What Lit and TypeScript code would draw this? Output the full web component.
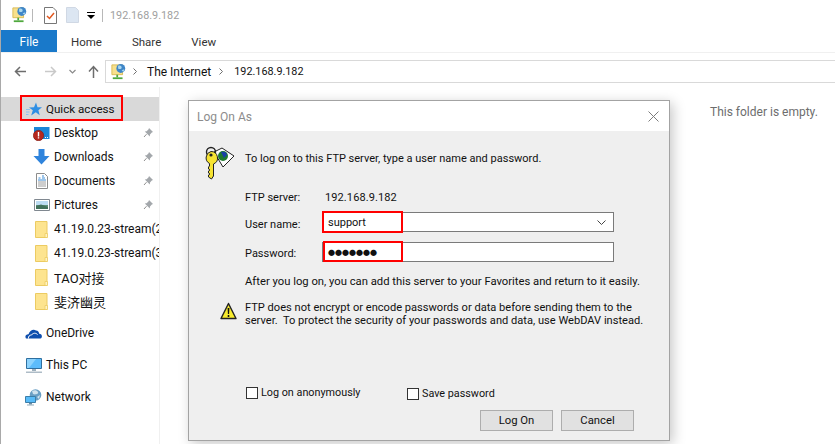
import { LitElement, html, css } from "lit";
import { customElement } from "lit/decorators.js";

const netIcon = html`<svg viewBox="0 0 18 20" width="16" height="18"><path d="M1 2h12v11H1z" fill="#f7e08c" stroke="#d8b84e"/><circle cx="11" cy="6" r="5" fill="#3f86c8"/><path d="M8 3c2-1 4 0 4 2s-3 2-4 1zM12 8l3-1-1 3z" fill="#a9d7ee"/><path d="M6 13h2v3H6z" fill="#4fa83d"/><path d="M2 16h11v2H2z" fill="#4fa83d"/></svg>`;
const pin = html`<svg class="pin" viewBox="0 0 11 11" width="11" height="11"><path d="M6 1l4 4-1.2.6L7 7.600 6.800 9.600 1.800 4.400 3.600 4.200l2-2z" fill="#a3a7ab"/><path d="M3.500 7.200L1 10" stroke="#8f8f8f" fill="none"/></svg>`;
const folder = html`<svg viewBox="0 0 13 17" width="13" height="17"><path d="M.5.500h11.500v16H.5z" fill="#fde48f" stroke="#eccb62"/><path d="M10 12.500h2.500v4H10z" fill="#fff3c4" stroke="#eccb62" stroke-width=".8"/></svg>`;

const icons: Record<string, unknown> = {
  star: html`<svg viewBox="0 0 16 15" width="16" height="15"><path d="M10 .5l1.500 4.700 4.500.1-3.600 2.900 1.300 5-3.900-2.900-4.600 3.200 1.600-5.300L3 5.400l5-.1z" fill="#2f8fe4"/><path d="M0 7.500h4M0 10h3.500M0 12.500h2.500" stroke="#8cc4ef"/></svg>`,
  desktop: html`<svg viewBox="0 0 17 15" width="17" height="15"><path d="M1 1h15.500v12H1z" fill="#1a86d8"/><path d="M12 11h1v1h-1zM14 11h1v1h-1z" fill="#fff"/><circle cx="5.500" cy="9.500" r="5.200" fill="#b5271e" stroke="#7d1913" stroke-width=".6"/><path d="M4.800 6h1.400v4.400H4.800zM4.800 11.200h1.400v1.400H4.800z" fill="#fff"/></svg>`,
  downloads: html`<svg viewBox="0 0 17 16" width="17" height="16"><path d="M5.500 0h6v7h5L8.500 15.500.5 7h5z" fill="#2f84dc"/></svg>`,
  documents: html`<svg viewBox="0 0 12 16" width="12" height="16"><path d="M.5.500h8l3 3v12H.5z" fill="#fff" stroke="#8c8c8c"/><path d="M2.500 5h2M6 3h2M6 5h3M2 7h8" stroke="#3b8cd6"/><path d="M2 9h8M2 11h8M2 13h8" stroke="#9c9c9c"/></svg>`,
  pictures: html`<svg viewBox="0 0 16 12" width="16" height="12"><path d="M.5.500h15v11H.5z" fill="#fff" stroke="#808890"/><path d="M2 2h12v4H2z" fill="#bcdcf2"/><path d="M2 6h12v4H2z" fill="#5f9079"/><path d="M2 7l5-1.500L14 8v2H2z" fill="#41705a"/></svg>`,
  folder,
  onedrive: html`<svg viewBox="0 0 17 11" width="17" height="11"><path d="M1 10.500C-.5 8.500 1 6 3.500 6.200 4.500 2.500 8.500.5 11 2.500c2 .2 3 1.500 3.200 3.200 2-.1 3 1.400 2.600 3.200-.2 1-1 1.600-2 1.600H1z" fill="#0f4fae"/><path d="M3.500 10.500c-.4-2 1-3.500 3.200-3.600 1-2 4.500-2.300 5.800-.3" stroke="#fff" fill="none"/></svg>`,
  pc: html`<svg viewBox="0 0 16 15" width="16" height="15"><path d="M.5.500h15v10H.5z" fill="#5cbcfb" stroke="#2f6f9f"/><path d="M1 1h9L3 10H1z" fill="#8dd3fd"/><path d="M6 11h4v2H6z" fill="#9fb0bd"/><path d="M0 13.500h16V15H0z" fill="#aebcc7"/></svg>`,
  network: html`<svg viewBox="0 0 17 17" width="17" height="17"><circle cx="10.500" cy="6" r="5.800" fill="#6a9fc4"/><path d="M7 2c2-1 5-1 6 1s-3 3-5 2zM12 8l3-2-1 4z" fill="#cfe2ee"/><path d="M.5 7.500h10v6H.5z" fill="#58bbf8" stroke="#3c7ea8"/><path d="M4 14h3v1.500H4z" fill="#6a8ca2"/><path d="M2 15.500h7v1H2z" fill="#8fa8b8"/></svg>`,
};

const nav: Array<[string, string, boolean?]> = [
  ["Desktop", "desktop", true],
  ["Downloads", "downloads", true],
  ["Documents", "documents", true],
  ["Pictures", "pictures", true],
  ["41.19.0.23-stream(2)", "folder"],
  ["41.19.0.23-stream(3)", "folder"],
  ["TAO对接", "folder"],
  ["斐济幽灵", "folder"],
];

@customElement("app-root")
export class AppRoot extends LitElement {
  static styles = css`
    :host {
      display: block; width: 835px; height: 444px; overflow: hidden; position: relative;
      background: #fff; color: #000;
      font-family: Roboto, "Noto Sans CJK SC", sans-serif; font-size: 12px;
      border-left: 1px solid #a9a9a9; box-sizing: border-box;
    }
    svg { display: block; flex: none; }
    .titlebar { height: 30px; display: flex; align-items: center; padding-left: 11px; color: #a0a0a0; }
    .ip { font-size: 10.8px; }
    .sep { width: 1px; height: 13px; background: #b8b8b8; }
    .tabs { height: 23px; display: flex; align-items: stretch; border-bottom: 1px solid #f0f0f0; box-sizing: border-box; font-size: 11.5px; }
    .file { width: 56px; background: #1979ca; color: #fff; display: flex; align-items: center; justify-content: center; padding-top: 1px; box-sizing: border-box; font-size: 12px; }
    .tab { display: flex; align-items: center; color: #333; padding-top: 1px; }
    .navbar { height: 34px; display: flex; align-items: center; box-sizing: border-box; padding-top: 3px; }
    .addr { margin-left: 6px; flex: 1; height: 21px; border: 1px solid #d9d9d9; border-right: none; display: flex; align-items: center; padding-left: 5px; font-size: 12px; color: #111; }
    .body { display: grid; grid-template-columns: 159px 1fr; height: 357px; }
    .side { border-right: 1px solid #f0f0f0; padding-top: 10px; overflow: hidden; }
    .row { height: 24px; display: flex; align-items: center; white-space: nowrap; position: relative; font-size: 12px; color: #111; width: 157px; overflow: hidden; }
    .row.cjk { font-size: 13px; }
    .row.active { background: #d9d9d9; font-size: 11.6px; }
    .row.top { padding-left: 24px; }
    .row.sub { padding-left: 32px; }
    .iconbox { display: flex; justify-content: center; flex: none; }
    .row.sub .iconbox { width: 17px; margin-right: 4px; }
    .row.top .iconbox { width: 17px; margin-right: 4px; }
    .pin { position: absolute; left: 142px; top: 6px; }
    .gap { height: 8px; }
    .content { color: #6d6d6d; padding: 18px 0 0 550px; font-size: 12px; }
    .hl { position: absolute; border: 2px solid #f00; box-sizing: border-box; pointer-events: none; }
    .dialog {
      position: absolute; left: 187px; top: 100px; width: 482px; height: 341px; box-sizing: border-box;
      border: 1px solid #a3a3a3; background: #efefef; box-shadow: 3px 3px 12px rgba(0,0,0,.22);
      font-size: 11px; color: #111;
    }
    .dtitle { height: 30px; background: #fff; display: flex; align-items: center; justify-content: space-between; padding: 1px 10px 0 8px; box-sizing: border-box; color: #8c8c8c; font-size: 12px; }
    .dbody { padding: 15px 19px 0 15px; }
    .intro { display: flex; align-items: flex-start; height: 39px; }
    .intro span { margin: 6px 0 0 9px; white-space: nowrap; }
    .form { margin: 2px 0 0 41px; display: grid; grid-template-columns: 77px 292px; align-items: center; }
    .form .l, .form .v { line-height: 20px; height: 20px; box-sizing: border-box; white-space: nowrap; }
    .form .r0 { padding-top: 1px; }
    .form .v { padding-left: 3px; letter-spacing: .1px; }
    .input { height: 20px; border: 1px solid #7a7a7a; background: #fff; box-sizing: border-box; padding-left: 5px; display: flex; align-items: center; justify-content: space-between; padding-right: 7px; }
    .form .r1 { margin-top: 5px; }
    .form .r2 { margin-top: 10px; }
    .form .l.r1 { padding-top: 3px; }
    .form .l.r2 { padding-top: 2px; }
    .dots { font-size: 7px; letter-spacing: 0; }
    .note { margin: 13px 0 0 41px; white-space: nowrap; font-size: 11.25px; }
    .warn { display: flex; margin: 14px 0 0 16px; }
    .warn span { margin-left: 8px; line-height: 13px; white-space: nowrap; margin-top: -1px; font-size: 11.1px; }
    .checks { display: flex; margin: 59px 0 0 42px; height: 24px; font-size: 10.8px; }
    .chk { display: flex; align-items: center; height: 13px; white-space: nowrap; }
    .chk i { width: 12px; height: 12px; box-sizing: border-box; border: 1px solid #333; background: #fff; margin-right: 3px; display: block; }
    .chk.one { width: 161px; }
    .chk.two { margin-top: 1px; }
    .btns { display: flex; justify-content: flex-end; gap: 8px; margin: 0 16px 0 0; }
    .btn { width: 73px; height: 21px; border: 1px solid #adadad; background: #e1e1e1; display: flex; align-items: center; justify-content: center; box-sizing: border-box; font-size: 11.3px; }
  `;

  render() {
    return html`
      <div class="titlebar">
        ${netIcon}
        <div class="sep" style="margin:0 11px 0 4px"></div>
        <svg viewBox="0 0 13 17" width="13" height="17"><path d="M.5.500h8.500l3.500 3.500v12.500H.5z" fill="#fff" stroke="#777"/><path d="M3 9l2.500 2.500L10 6" stroke="#e2571e" stroke-width="1.500" fill="none"/></svg>
        <svg style="margin-left:9px" viewBox="0 0 13 16" width="13" height="16"><path d="M.5.500h9l3 3v12H.5z" fill="#dce6f2" stroke="#d0d8e4"/></svg>
        <svg style="margin-left:8px" viewBox="0 0 8 7" width="8" height="7"><path d="M0 0h8v1H0zM0 3h8L4 7z" fill="#000"/></svg>
        <div class="sep" style="margin:0 7px 0 7px"></div>
        <span class="ip">192.168.9.182</span>
      </div>
      <div class="tabs">
        <div class="file">File</div>
        <div class="tab" style="margin-left:14px">Home</div>
        <div class="tab" style="margin-left:30px">Share</div>
        <div class="tab" style="margin-left:30px">View</div>
      </div>
      <div class="navbar">
        <svg style="margin-left:13px" viewBox="0 0 13 11" width="13" height="11"><path d="M12 5.500H2M6 1L1.500 5.500 6 10" stroke="#6d6d6d" stroke-width="1.500" fill="none"/></svg>
        <svg style="margin-left:17px" viewBox="0 0 13 11" width="13" height="11"><path d="M1 5.500h10M7 1l4.500 4.500L7 10" stroke="#c9c9c9" stroke-width="1.500" fill="none"/></svg>
        <svg style="margin-left:12px" viewBox="0 0 7 5" width="7" height="5"><path d="M.5 1L3.500 4l3-3" stroke="#8a8a8a" stroke-width="1.200" fill="none"/></svg>
        <svg style="margin-left:12px" viewBox="0 0 11 13" width="11" height="13"><path d="M5.500 13V2M1 6.500L5.500 1.500 10 6.500" stroke="#6d6d6d" stroke-width="1.500" fill="none"/></svg>
        <div class="addr">
          ${netIcon}
          <svg style="margin:0 10px 0 6px" viewBox="0 0 4 7" width="4" height="7"><path d="M.5.500L3.500 3.500.5 6.500" stroke="#707070" fill="none"/></svg>
          <span>The Internet</span>
          <svg style="margin:0 11px 0 8px" viewBox="0 0 4 7" width="4" height="7"><path d="M.5.500L3.500 3.500.5 6.500" stroke="#707070" fill="none"/></svg>
          <span class="ip">192.168.9.182</span>
        </div>
      </div>
      <div class="body">
        <div class="side">
          <div class="row top active"><span class="iconbox">${icons.star}</span>Quick access</div>
          ${nav.map(([t, ic, p]) => html`<div class="row sub ${/[^\x00-\x7f]/.test(t) ? "cjk" : ""}"><span class="iconbox">${icons[ic]}</span>${t}${p ? pin : ""}</div>`)}
          <div class="gap"></div>
          <div class="row top"><span class="iconbox">${icons.onedrive}</span>OneDrive</div>
          <div class="gap"></div>
          <div class="row top"><span class="iconbox">${icons.pc}</span>This PC</div>
          <div class="gap"></div>
          <div class="row top"><span class="iconbox">${icons.network}</span>Network</div>
        </div>
        <div class="content">This folder is empty.</div>
      </div>
      <div class="hl" style="left:19px;top:95px;width:103px;height:26px"></div>
      <div class="dialog">
        <div class="dtitle">
          <span>Log On As</span>
          <svg viewBox="0 0 11 11" width="11" height="11"><path d="M.5.500l10 10M10.500.500l-10 10" stroke="#7c7c7c" fill="none"/></svg>
        </div>
        <div class="dbody">
          <div class="intro">
            <svg viewBox="0 0 32 35" width="32" height="35">
              <path d="M10 6l8-4 12 8-11 11z" fill="#fff" stroke="#222"/>
              <circle cx="19" cy="10" r="5" fill="#1f7a2e"/><path d="M17 6c2-1 6 0 6 3l-3 3z" fill="#1a3fa8"/>
              <circle cx="7" cy="6" r="4.500" fill="none" stroke="#222" stroke-width="1.400"/>
              <path d="M7 5.500a6.500 6.500 0 0 1 2.500 12.500V30l-2 3-3-2v-2l1.500-1-1.500-1v-2l1.500-1-1.500-1v-2l1-1v-2.500A6.500 6.500 0 0 1 7 5.500z" fill="#f6e332" stroke="#222"/>
              <circle cx="7" cy="9" r="1.600" fill="#222"/>
            </svg>
            <span>To log on to this FTP server, type a user name and password.</span>
          </div>
          <div class="form">
            <div class="l r0">FTP server:</div><div class="v r0">192.168.9.182</div>
            <div class="l r1">User name:</div>
            <div class="input r1"><span>support</span><svg viewBox="0 0 9 5" width="9" height="5"><path d="M.5.500l4 4 4-4" stroke="#444" fill="none"/></svg></div>
            <div class="l r2">Password:</div>
            <div class="input r2"><span class="dots">●●●●●●●</span></div>
          </div>
          <div class="note">After you log on, you can add this server to your Favorites and return to it easily.</div>
          <div class="warn">
            <svg viewBox="0 0 17 18" width="17" height="18"><path d="M8.500 1.500L16 16.500H1z" fill="#f8ec2e" stroke="#222" stroke-width="1.400" stroke-linejoin="round"/><path d="M7.600 6h1.800l-.3 6H7.900zM7.700 13h1.600v2H7.700z" fill="#111"/></svg>
            <span>FTP does not encrypt or encode passwords or data before sending them to the<br>server.&nbsp; To protect the security of your passwords and data, use WebDAV instead.</span>
          </div>
          <div class="checks">
            <div class="chk one"><i></i>Log on anonymously</div>
            <div class="chk two"><i></i>Save password</div>
          </div>
          <div class="btns"><div class="btn">Log On</div><div class="btn">Cancel</div></div>
        </div>
      </div>
      <div class="hl" style="left:321px;top:211px;width:81px;height:22px"></div>
      <div class="hl" style="left:322px;top:241px;width:80px;height:21px"></div>
    `;
  }
}
